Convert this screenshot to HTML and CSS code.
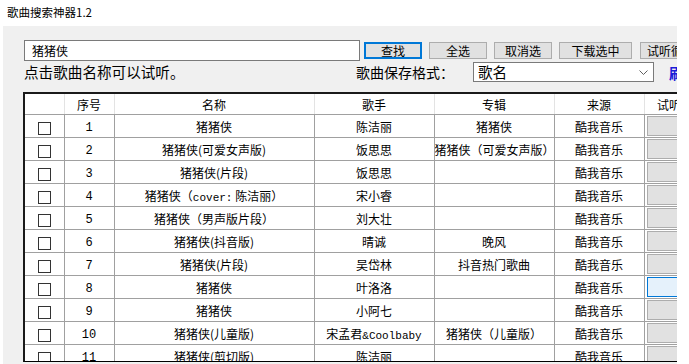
FILE: index.html
```html
<!DOCTYPE html>
<html lang="zh-CN">
<head>
    <meta charset="UTF-8">
    <title>歌曲搜索神器1.2</title>
    <link rel="stylesheet" href="styles.css">
</head>
<body>
    <div class="titlebar">歌曲搜索神器1.2</div>
    <div class="window">
        <div class="toolbar">
            <input class="search" type="text" value="猪猪侠">
            <button class="btn btn-default">查找</button>
            <button class="btn">全选</button>
            <button class="btn">取消选</button>
            <button class="btn btn-wide">下载选中</button>
            <button class="btn btn-loop">试听循环播放</button>
        </div>
        <div class="options">
            <span class="hint">点击歌曲名称可以试听。</span>
            <span class="format-label">歌曲保存格式：</span>
            <div class="select">
                <span>歌名</span>
                <svg width="9" height="5" viewBox="0 0 9 5"><path d="M0.5 0.5 L4.5 4.5 L8.5 0.5" fill="none" stroke="#606060" stroke-width="1"/></svg>
            </div>
            <a class="refresh" href="#">刷新</a>
        </div>
        <div class="grid">
            <table>
                <colgroup>
                    <col style="width:39px">
                    <col style="width:50px">
                    <col style="width:200px">
                    <col style="width:120px">
                    <col style="width:120px">
                    <col style="width:90px">
                    <col style="width:50px">
                </colgroup>
                <thead>
                    <tr><th></th><th>序号</th><th>名称</th><th>歌手</th><th>专辑</th><th>来源</th><th>试听</th></tr>
                </thead>
                <tbody>
                    <tr><td><span class="check"></span></td><td class="num">1</td><td>猪猪侠</td><td>陈洁丽</td><td>猪猪侠</td><td>酷我音乐</td><td><span class="play"></span></td></tr>
                    <tr><td><span class="check"></span></td><td class="num">2</td><td>猪猪侠(可爱女声版)</td><td>饭思思</td><td>猪猪侠（可爱女声版）</td><td>酷我音乐</td><td><span class="play"></span></td></tr>
                    <tr><td><span class="check"></span></td><td class="num">3</td><td>猪猪侠(片段)</td><td>饭思思</td><td></td><td>酷我音乐</td><td><span class="play"></span></td></tr>
                    <tr><td><span class="check"></span></td><td class="num">4</td><td>猪猪侠（<span class="latin">cover:</span> 陈洁丽）</td><td>宋小睿</td><td></td><td>酷我音乐</td><td><span class="play"></span></td></tr>
                    <tr><td><span class="check"></span></td><td class="num">5</td><td>猪猪侠（男声版片段）</td><td>刘大壮</td><td></td><td>酷我音乐</td><td><span class="play"></span></td></tr>
                    <tr><td><span class="check"></span></td><td class="num">6</td><td>猪猪侠(抖音版)</td><td>晴诚</td><td>晚风</td><td>酷我音乐</td><td><span class="play"></span></td></tr>
                    <tr><td><span class="check"></span></td><td class="num">7</td><td>猪猪侠(片段)</td><td>吴岱林</td><td>抖音热门歌曲</td><td>酷我音乐</td><td><span class="play"></span></td></tr>
                    <tr><td><span class="check"></span></td><td class="num">8</td><td>猪猪侠</td><td>叶洛洛</td><td></td><td>酷我音乐</td><td><span class="play hover"></span></td></tr>
                    <tr><td><span class="check"></span></td><td class="num">9</td><td>猪猪侠</td><td>小阿七</td><td></td><td>酷我音乐</td><td><span class="play"></span></td></tr>
                    <tr><td><span class="check"></span></td><td class="num">10</td><td>猪猪侠(儿童版)</td><td>宋孟君<span class="latin">&amp;Coolbaby</span></td><td>猪猪侠（儿童版）</td><td>酷我音乐</td><td><span class="play"></span></td></tr>
                    <tr><td><span class="check"></span></td><td class="num">11</td><td>猪猪侠(剪切版)</td><td>陈洁丽</td><td></td><td>酷我音乐</td><td><span class="play"></span></td></tr>
                </tbody>
            </table>
        </div>
    </div>
</body>
</html>
```

FILE: styles.css
```css
body {
    margin: 0;
    background-color: white;
    font-family: "Noto Sans CJK SC", "Noto Sans", sans-serif;
    color: black;
    overflow: hidden;
}

.titlebar {
    height: 26px;
    padding-left: 7px;
    font-size: 11.5px;
    line-height: 25px;
}

.window {
    margin-left: 3px;
    width: 674px;
    height: 338px;
    background-color: #f0f0f0;
    overflow: hidden;
}

.toolbar {
    display: flex;
    align-items: center;
    padding-top: 14px;
    padding-left: 21px;
    height: 21px;
    white-space: nowrap;
}

.toolbar > *,
.options > * {
    flex-shrink: 0;
}

.search {
    box-sizing: border-box;
    width: 336px;
    height: 21px;
    margin: 0 4px 0 0;
    padding: 0 7px;
    border: 1px solid #7a7a7a;
    background-color: white;
    font-family: "Noto Sans CJK SC", sans-serif;
    font-size: 12px;
    outline: none;
}

.btn {
    box-sizing: border-box;
    width: 58px;
    height: 17px;
    margin: 0 7px 0 0;
    padding: 0;
    border: 1px solid #adadad;
    background-color: #e1e1e1;
    font-family: "Noto Sans CJK SC", sans-serif;
    font-size: 12px;
    line-height: 14px;
    color: black;
}

.btn-default {
    border: 2px solid #0078d7;
    line-height: 12px;
}

.btn-wide {
    width: 73px;
    margin-right: 8px;
}

.btn-loop {
    width: 86px;
}

.options {
    display: flex;
    align-items: center;
    margin-top: 1px;
    padding-left: 21px;
    height: 20px;
    white-space: nowrap;
}

.hint {
    width: 332px;
    font-size: 14.6px;
    line-height: 20px;
}

.format-label {
    width: 117px;
    font-size: 14px;
    line-height: 20px;
}

.select {
    box-sizing: border-box;
    display: flex;
    align-items: center;
    justify-content: space-between;
    width: 181px;
    height: 20px;
    padding: 0 5px 0 4px;
    border: 1px solid #7a7a7a;
    background-color: white;
    font-size: 14.6px;
    line-height: 18px;
}

.refresh {
    margin-left: 15px;
    font-size: 14.6px;
    font-weight: bold;
    color: #1c1cd8;
    text-decoration: none;
}

.grid {
    margin-top: 10px;
    margin-left: 20px;
    width: 680px;
    height: 267px;
    border-top: 2px solid #1a1a1a;
    border-left: 2px solid #1a1a1a;
    border-bottom: 1px solid #000;
    background-color: white;
    overflow: hidden;
}

table {
    border-collapse: collapse;
    table-layout: fixed;
    width: 669px;
    font-size: 12px;
}

th {
    height: 20px;
    padding: 0;
    font-weight: normal;
    border-right: 1px solid #e3e3e3;
    border-bottom: 1px solid #a0a0a0;
    text-align: center;
    white-space: nowrap;
}

td {
    height: 22px;
    padding: 0;
    border-right: 1px solid #a0a0a0;
    border-bottom: 1px solid #a0a0a0;
    text-align: center;
    white-space: nowrap;
    overflow: hidden;
}

.num,
.latin {
    font-family: "Liberation Mono", "Noto Sans CJK SC", monospace;
}

td.num {
    height: 18px;
    padding-top: 4px;
    font-size: 12px;
}

.latin {
    font-size: 11px;
}

.check {
    display: inline-block;
    box-sizing: border-box;
    width: 13px;
    height: 13px;
    border: 1px solid #333;
    background-color: white;
    vertical-align: middle;
}

.play {
    display: block;
    box-sizing: border-box;
    margin: 0 0 0 2px;
    height: 20px;
    border: 1px solid #adadad;
    background-color: #e1e1e1;
}

.play.hover {
    border-color: #0078d7;
    background-color: #e5f1fb;
}
```
